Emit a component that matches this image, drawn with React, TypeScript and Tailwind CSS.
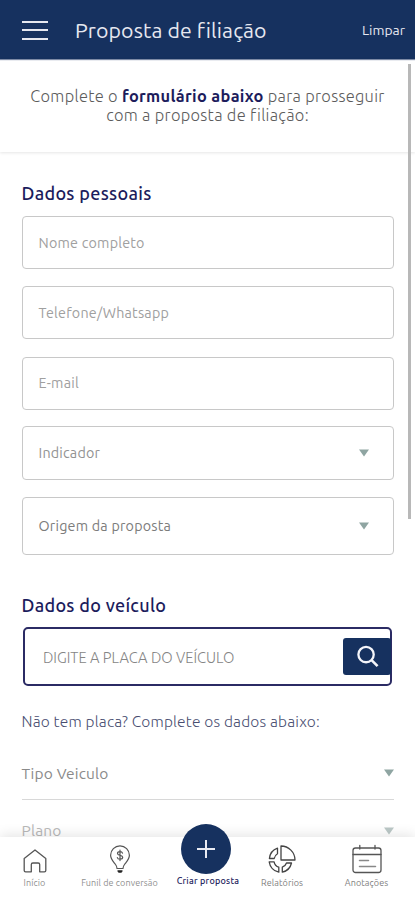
import type { ReactNode } from 'react';
import clsx from 'clsx';

function Caret({ className }: { className?: string }) {
  return (
    <svg viewBox="0 0 10 8" className={clsx('h-[8px] w-[10px] shrink-0 fill-[#8fa5a2]', className)}>
      <path d="M0 0.5h10L5 7.5z" />
    </svg>
  );
}

function Field({
  label,
  className,
  labelClassName,
  select,
}: {
  label: string;
  className?: string;
  labelClassName: string;
  select?: boolean;
}) {
  return (
    <div
      className={clsx(
        'flex items-center justify-between rounded-[4px] border-[1.5px] border-[#c8c8c8] pr-[23.5px] pl-[16px]',
        className
      )}
    >
      <span className={clsx('whitespace-nowrap pt-[2px] text-[14.3px] tracking-[0.22px]', labelClassName)}>{label}</span>
      {select && <Caret />}
    </div>
  );
}

function HomeIcon() {
  return (
    <svg viewBox="0 0 24 24" className="h-6 w-6" fill="none" stroke="#555" strokeWidth="1.3" strokeLinejoin="round">
      <path d="M1.2 9.4 12 1l10.8 8.4v12q0 1.4-1.4 1.4h-4.7v-7.2q0-1.6-1.6-1.6H9.9q-1.6 0-1.6 1.6v7.2H2.6q-1.4 0-1.4-1.4z" />
    </svg>
  );
}

function BulbIcon() {
  return (
    <svg viewBox="0 0 20 28" className="h-7 w-5" fill="none" stroke="#555" strokeWidth="1.2" strokeLinejoin="round" strokeLinecap="round">
      <path d="M7 23.5c0-1.5-.5-2.700-1.500-4C3.200 16.500.6 14 .6 10.200a9.400 9.400 0 0 1 18.800 0c0 3.800-2.600 6.300-4.900 9.300-1 1.300-1.500 2.500-1.500 4z" />
      <path d="M12.500 8.100c-.3-1-1.200-1.500-2.500-1.500-1.500 0-2.500.7-2.500 1.900 0 2.800 5.200 1 5.200 3.800 0 1.200-1.100 1.900-2.700 1.900-1.500 0-2.500-.6-2.700-1.700M10 5.200v10.400" />
      <path d="M8 26h4M8.800 27h2.400" stroke="#222" strokeWidth="1.400" />
    </svg>
  );
}

function ChartIcon() {
  return (
    <svg viewBox="0 0 28 28" className="h-7 w-7" fill="none" stroke="#444" strokeWidth="1.300" strokeLinejoin="round">
      <path d="M13 1v14h14A14 14 0 0 0 13 1z" />
      <path d="M9.500 3.200v5.600a7 7 0 0 0-3.300 4.700H1.400A12.300 12.300 0 0 1 9.500 3.200z" />
      <path d="M1.200 16.800h4.900a7 7 0 0 0 4.700 5.400v5A12.300 12.300 0 0 1 1.200 16.800z" />
      <path d="M14.300 27.200v-5a7 7 0 0 0 4.200-4.200h5a12.300 12.300 0 0 1-9.200 9.200z" />
    </svg>
  );
}

function NotesIcon() {
  return (
    <svg viewBox="0 0 30 30" className="h-[30px] w-[30px]" fill="none" stroke="#555" strokeWidth="1.300" strokeLinecap="round">
      <rect x="1" y="4" width="28" height="24.500" rx="2.500" />
      <path d="M1 10.500h28M7.800 1.500V5M23 1.500V5" />
      <path d="M7.500 16.500h9M7.500 22.500h16" stroke="#888" strokeWidth="1.500" />
    </svg>
  );
}

function NavItem({
  icon,
  label,
  className,
  labelClassName,
}: {
  icon: ReactNode;
  label: string;
  className: string;
  labelClassName: string;
}) {
  return (
    <div className={clsx('flex shrink-0 flex-col items-center', className)}>
      <div className="flex h-[33px] items-center justify-center">{icon}</div>
      <span className={clsx('mt-[2px] whitespace-nowrap text-[9px] leading-[12px] tracking-[0.1px]', labelClassName)}>{label}</span>
    </div>
  );
}

export default function App() {
  return (
    <div className="relative flex h-[900px] w-[415px] flex-col overflow-hidden bg-white font-['Ubuntu','Noto_Sans',sans-serif]">
      <header className="flex h-[59px] shrink-0 items-center bg-[#16315f] pt-[1px] pr-[10px] pl-[21.5px] text-[#e6e8f0] shadow-[0_1px_1px_#7d8aa5]">
        <div className="flex w-[26.500px] flex-col gap-[6.500px]">
          <span className="h-[2px] bg-current" />
          <span className="h-[2px] bg-current" />
          <span className="h-[2px] bg-current" />
        </div>
        <h1 className="ml-[27px] whitespace-nowrap text-[21.300px] leading-6 tracking-[0.100px]">Proposta de filiação</h1>
        <span className="ml-auto whitespace-nowrap pt-px text-[13.900px]">Limpar</span>
      </header>

      <p className="h-[93px] shrink-0 pt-[28px] text-center text-[16.400px] font-light leading-[19px] tracking-[0.300px] text-[#5c5c5c] shadow-[0_1px_3px_#0000001a]">
        Complete o <b className="font-bold text-[#1c1c5c]">formulário abaixo</b> para prosseguir
        <br />
        com a proposta de filiação:
      </p>

      <main className="flex flex-col px-[21.500px]">
        <h2 className="mt-[29px] h-6 whitespace-nowrap text-[18px] font-medium leading-6 tracking-[0.300px] text-[#1c1c5c]">Dados pessoais</h2>
        <div className="mt-[11px] flex flex-col gap-[17px]">
          <Field label="Nome completo" className="h-[53px]" labelClassName="text-[#a0a0a0]" />
          <Field label="Telefone/Whatsapp" className="h-[53px]" labelClassName="text-[#a0a0a0]" />
          <Field label="E-mail" className="mt-[0.500px] h-[53px]" labelClassName="text-[#a0a0a0]" />
          <Field label="Indicador" className="-mt-[0.500px] h-[54px]" labelClassName="text-[#929292]" select />
          <Field label="Origem da proposta" className="h-[58px]" labelClassName="text-[#7c7c7c]" select />
        </div>

        <h2 className="mt-[38px] h-6 whitespace-nowrap text-[18px] font-medium leading-6 tracking-[0.300px] text-[#1c1c5c]">Dados do veículo</h2>
        <div className="mr-[1.500px] ml-[1.500px] mt-[10px] flex h-[59px] items-center justify-between rounded-[5px] border-2 border-[#2b2b64] pl-[18px]">
          <span className="whitespace-nowrap pt-[3px] text-[14.800px] font-light text-[#858585]">DIGITE A PLACA DO VEÍCULO</span>
          <button type="button" className="-mr-px flex h-[37px] w-[48px] items-center justify-center rounded-[3px] bg-[#16315f]">
            <svg viewBox="0 0 24 24" className="h-[23px] w-[23px]" fill="none" stroke="#f4f5fa" strokeWidth="2.400">
              <circle cx="10.500" cy="10" r="8" />
              <path d="m16 15.500 6.500 6.500" strokeWidth="2.800" />
            </svg>
          </button>
        </div>

        <p className="mt-[24px] whitespace-nowrap text-[15.500px] font-light leading-6 tracking-[0.180px] text-[#484d70]">
          Não tem placa? Complete os dados abaixo:
        </p>
        <div className="mt-[13px] flex h-[52.500px] items-center justify-between border-b border-[#d8d8d8]">
          <span className="pt-px text-[15.500px] tracking-[0.150px] text-[#8a8a8a]">Tipo Veiculo</span>
          <Caret />
        </div>
        <div className="mt-[5px] flex h-[52px] items-center justify-between opacity-60">
          <span className="pt-px text-[15.500px] tracking-[0.150px] text-[#8a8a8a]">Plano</span>
          <Caret />
        </div>
      </main>

      <div className="absolute top-[64px] right-[4px] h-[455px] w-[3px] bg-[#b8b8b8]" />

      <nav className="absolute inset-x-0 bottom-0 flex h-[63px] bg-white pt-[5px] shadow-[0_-2px_12px_#0000001c]">
        <NavItem icon={<div className="pt-[5px]"><HomeIcon /></div>} label="Início" className="w-[69px]" labelClassName="text-[#909090]" />
        <NavItem icon={<BulbIcon />} label="Funil de conversão" className="w-[101px]" labelClassName="text-[#909090]" />
        <div className="-mt-[18px] flex w-[76px] shrink-0 flex-col items-center">
          <div className="mr-[4px] flex h-[49.500px] w-[49.500px] shrink-0 items-center justify-center rounded-full bg-[#16315f]">
            <svg viewBox="0 0 18 18" className="h-[18px] w-[18px]" stroke="#e8eaf2" strokeWidth="2">
              <path d="M9 0v18M0 9h18" />
            </svg>
          </div>
          <span className="mt-[1px] whitespace-nowrap text-[9px] leading-[12px] font-medium tracking-[0.250px] text-[#1c1c5c]">Criar proposta</span>
        </div>
        <NavItem icon={<ChartIcon />} label="Relatórios" className="w-[72px]" labelClassName="text-[#808080]" />
        <NavItem icon={<NotesIcon />} label="Anotações" className="w-[97px]" labelClassName="text-[#808080]" />
      </nav>
    </div>
  );
}
